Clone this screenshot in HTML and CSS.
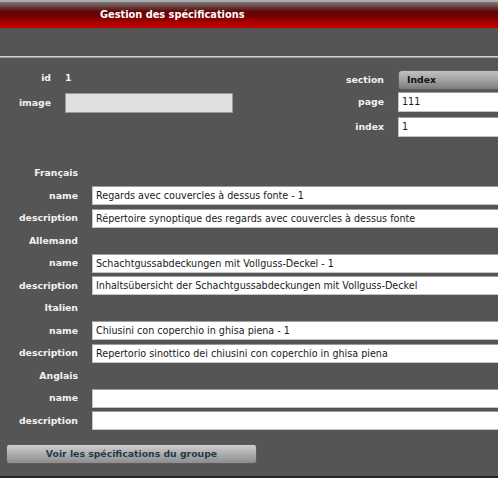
FILE: index.html
```html
<!DOCTYPE html>
<html lang="fr">
<head>
<meta charset="utf-8">
<title>Gestion des spécifications</title>
<link rel="stylesheet" href="styles.css">
</head>
<body>
<header class="titlebar"><h1 class="title">Gestion des spécifications</h1></header>
<div class="toolbar"></div>
<main class="content">
  <section class="meta">
    <div class="meta-left">
      <span class="lbl">id</span><span class="val">1</span>
      <span class="lbl">image</span><div class="field field-image"></div>
    </div>
    <div class="meta-right">
      <span class="lbl">section</span><div class="select">Index</div>
      <span class="lbl">page</span><div class="field">111</div>
      <span class="lbl">index</span><div class="field">1</div>
    </div>
  </section>
  <section class="langs">
    <span class="lbl">Français</span><span></span>
    <span class="lbl">name</span><div class="field">Regards avec couvercles à dessus fonte - 1</div>
    <span class="lbl">description</span><div class="field">Répertoire synoptique des regards avec couvercles à dessus fonte</div>
    <span class="lbl">Allemand</span><span></span>
    <span class="lbl">name</span><div class="field">Schachtgussabdeckungen mit Vollguss-Deckel - 1</div>
    <span class="lbl">description</span><div class="field">Inhaltsübersicht der Schachtgussabdeckungen mit Vollguss-Deckel</div>
    <span class="lbl">Italien</span><span></span>
    <span class="lbl">name</span><div class="field">Chiusini con coperchio in ghisa piena - 1</div>
    <span class="lbl">description</span><div class="field">Repertorio sinottico dei chiusini con coperchio in ghisa piena</div>
    <span class="lbl">Anglais</span><span></span>
    <span class="lbl">name</span><div class="field"></div>
    <span class="lbl">description</span><div class="field"></div>
  </section>
  <div class="actions"><button class="btn" type="button">Voir les spécifications du groupe</button></div>
</main>
</body>
</html>
```

FILE: styles.css
```css
html, body {
  margin: 0;
  padding: 0;
}
body {
  width: 498px;
  height: 478px;
  box-sizing: border-box;
  overflow: hidden;
  background: #555555;
  font-family: "DejaVu Sans", Verdana, sans-serif;
  display: flex;
  flex-direction: column;
  border-bottom: 2px solid #262626;
}
.titlebar {
  height: 26px;
  border-top: 2px solid #ababab;
  background: linear-gradient(to bottom, #7a7a7a 0%, #5e0a0a 35%, #6a0000 50%, #b30000 85%, #c20000 100%);
  display: flex;
  align-items: center;
  padding-left: 100px;
  flex: none;
}
.title {
  margin: 0;
  font-size: 9.8px;
  font-weight: bold;
  color: #ffffff;
  line-height: 1;
}
.toolbar {
  height: 28px;
  flex: none;
  border-bottom: 1px solid #d2d2d2;
  box-shadow: 0 1px 0 #9a9a9a;
}
.content {
  flex: 1;
  padding-top: 1px;
}
.lbl {
  font-size: 9.3px;
  font-weight: bold;
  color: #f2f2f2;
  text-align: right;
  line-height: 20px;
  white-space: nowrap;
}
.val {
  font-size: 9.3px;
  font-weight: bold;
  color: #f2f2f2;
  line-height: 20px;
}
.meta {
  display: flex;
}
.meta-left {
  display: grid;
  grid-template-columns: 51px 168px;
  column-gap: 14px;
  row-gap: 5px;
  grid-auto-rows: 20px;
  padding-top: 10px;
  align-content: start;
}
.meta-right {
  display: grid;
  grid-template-columns: 60px 100px;
  column-gap: 14px;
  grid-template-rows: 22px 25px 20px;
  align-items: start;
  margin-left: 91px;
  padding-top: 12px;
}
.field {
  box-sizing: border-box;
  height: 20px;
  background: #ffffff;
  border: 1px solid #c4c4c4;
  border-top-color: #9c9c9c;
  font-size: 9.6px;
  color: #1a1a1a;
  line-height: 18px;
  padding-left: 3px;
  white-space: nowrap;
  overflow: hidden;
}
.meta-right .field,
.langs .field {
  border-right: none;
}
.field-image {
  background: #e0e0e0;
  border: 1px solid #9a9a9a;
}
.select {
  box-sizing: border-box;
  height: 20px;
  border: 1px solid #5f5f5f;
  border-right: none;
  border-radius: 4px 0 0 4px;
  background: linear-gradient(to bottom, #c2c2c2 0%, #a2a2a2 50%, #7c7c7c 100%);
  font-size: 9.3px;
  font-weight: bold;
  color: #111111;
  line-height: 18px;
  padding-left: 8px;
}
.langs {
  display: grid;
  grid-template-columns: 78px 406px;
  column-gap: 14px;
  grid-auto-rows: 22.5px;
  align-items: center;
  margin-top: 25px;
}
.langs .field {
  height: 19px;
  line-height: 17px;
}
.actions {
  padding: 10px 0 0 6px;
}
.btn {
  box-sizing: border-box;
  width: 251px;
  height: 20px;
  border: 1px solid #5c5c5c;
  border-radius: 3px;
  background: linear-gradient(to bottom, #cfcfcf 0%, #b0b0b0 45%, #8d8d8d 100%);
  font-family: "DejaVu Sans", Verdana, sans-serif;
  font-size: 9.3px;
  font-weight: bold;
  color: #1f3c4a;
  padding: 0;
  line-height: 18px;
  text-align: center;
}
```
